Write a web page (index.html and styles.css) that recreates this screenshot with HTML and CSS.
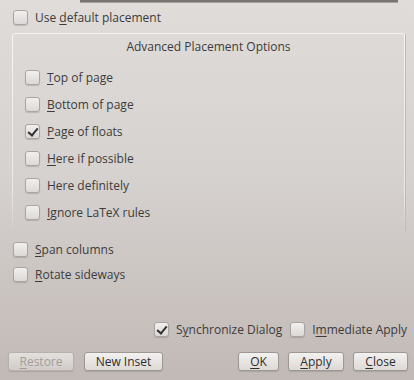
FILE: index.html
```html
<!DOCTYPE html>
<html>
<head>
  <meta charset="UTF-8">
  <title>Float Settings</title>
  <link rel="stylesheet" href="styles.css">
</head>
<body>
  <div class="dialog">
    <div class="top-frame"></div>

    <label class="check outer first"><span class="box"></span><span>Use <u>d</u>efault placement</span></label>

    <div class="group">
      <div class="group-title">Advanced Placement Options</div>
      <div class="group-list">
        <label class="check"><span class="box"></span><span><u>T</u>op of page</span></label>
        <label class="check"><span class="box"></span><span><u>B</u>ottom of page</span></label>
        <label class="check"><span class="box checked"></span><span><u>P</u>age of floats</span></label>
        <label class="check"><span class="box"></span><span><u>H</u>ere if possible</span></label>
        <label class="check"><span class="box"></span><span>Here def<u>i</u>nitely</span></label>
        <label class="check"><span class="box"></span><span><u>I</u>gnore LaTeX rules</span></label>
      </div>
    </div>

    <div class="extra-list">
      <label class="check outer"><span class="box"></span><span><u>S</u>pan columns</span></label>
      <label class="check outer"><span class="box"></span><span><u>R</u>otate sideways</span></label>
    </div>

    <div class="spacer"></div>

    <div class="sync-row">
      <label class="check"><span class="box checked"></span><span>S<u>y</u>nchronize Dialog</span></label>
      <label class="check"><span class="box"></span><span>I<u>m</u>mediate Apply</span></label>
    </div>

    <div class="button-row">
      <button class="btn btn-restore" disabled><u>R</u>estore</button>
      <button class="btn btn-new">New Inset</button>
      <div class="spacer"></div>
      <button class="btn btn-ok"><u>O</u>K</button>
      <button class="btn btn-apply"><u>A</u>pply</button>
      <button class="btn btn-close"><u>C</u>lose</button>
    </div>
  </div>
</body>
</html>
```

FILE: styles.css
```css
html, body {
  margin: 0;
  padding: 0;
  height: 100%;
}

body {
  font-family: "Open Sans", "Noto Sans", sans-serif;
  font-size: 12px;
  color: #3c3c3c;
  background: linear-gradient(to bottom, #dfdcd9 0%, #d6d2cf 45%, #c1b9b6 100%);
}

u {
  text-decoration: underline;
  text-underline-offset: 2px;
}

.dialog {
  height: 380px;
  box-sizing: border-box;
  display: flex;
  flex-direction: column;
  padding: 0 6px 9px 8px;
}

.top-frame {
  height: 2px;
  margin-left: 72px;
  width: 318px;
  background: #767370;
  border-bottom: 1px solid #a6a29f;
}

/* cases a cocher */
.check {
  display: flex;
  align-items: center;
  gap: 7px;
  height: 15px;
  white-space: nowrap;
}

.box {
  width: 13px;
  height: 13px;
  flex: none;
  border: 1px solid #a9a5a2;
  border-radius: 3px;
  background: linear-gradient(to bottom, #f1f0ef, #dcd9d7);
  box-shadow: 0 1px 1px rgba(0, 0, 0, 0.15);
  position: relative;
}

.box.checked::after {
  content: "";
  position: absolute;
  left: 4px;
  top: 1px;
  width: 4px;
  height: 8px;
  border-right: 2px solid #333;
  border-bottom: 2px solid #333;
  transform: rotate(40deg);
}

.outer {
  margin-left: 5px;
}

.first {
  margin-top: 7px;
}

/* groupe */
.group {
  margin: 8px 3px 0 4px;
  height: 198px;
  box-sizing: border-box;
  position: relative;
  border-top: 1px solid #f4f3f2;
  border-radius: 4px 4px 0 0;
}

.group::before,
.group::after {
  content: "";
  position: absolute;
  top: 0;
  bottom: 0;
  width: 1px;
  background: linear-gradient(to bottom, #f6f5f4 0%, #ebe8e6 80%, rgba(235, 232, 230, 0) 100%);
}

.group::before {
  left: 0;
}

.group::after {
  right: 0;
  box-shadow: 1px 0 0 #bdb9b6;
}

.group-title {
  text-align: center;
  margin-top: 4px;
  height: 18px;
  line-height: 18px;
}

.group-list {
  display: flex;
  flex-direction: column;
  gap: 12px;
  margin-top: 14px;
  padding-left: 13px;
}

.extra-list {
  display: flex;
  flex-direction: column;
  gap: 10px;
  margin-top: 11px;
}

.spacer {
  flex: 1;
}

.sync-row {
  display: flex;
  justify-content: flex-end;
  gap: 8px;
  padding-right: 1px;
  margin-bottom: 15px;
}

/* boutons */
.button-row {
  display: flex;
  gap: 9px;
}

.btn {
  font-family: inherit;
  font-size: 12px;
  color: #2e2e2e;
  height: 19px;
  padding: 0 10px;
  border: 1px solid #9e9894;
  border-radius: 3px;
  background: linear-gradient(to bottom, #f3f2f1, #dcd8d5);
  box-shadow: 0 1px 1px rgba(0, 0, 0, 0.12);
  line-height: 16px;
}

.btn:disabled {
  color: #a29d99;
  border-color: #b7b1ad;
  background: linear-gradient(to bottom, #e3e0de, #d1ccc9);
}

.btn-restore {
  width: 66px;
}

.btn-new {
  width: 79px;
  margin-left: 1px;
}

.btn-ok {
  width: 41px;
}

.btn-apply {
  width: 56px;
}

.btn-close {
  width: 55px;
}
```
